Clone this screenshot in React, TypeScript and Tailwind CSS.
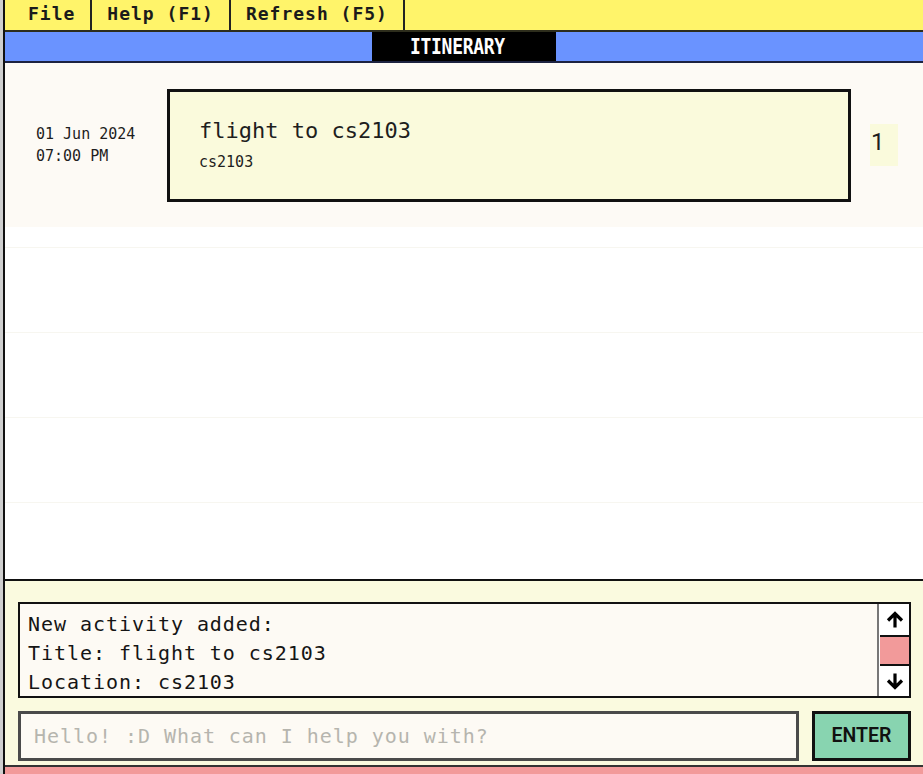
const mono = "font-['DejaVu_Sans_Mono',monospace]";

const menuItems = ["File", "Help (F1)", "Refresh (F5)"];

function MenuBar() {
  return (
    <div className={`flex h-[32px] shrink-0 border-b-2 border-[#2d2d1c] bg-[#fff46a] pl-[8px] ${mono}`}>
      {menuItems.map((item) => (
        <div
          key={item}
          className="h-[30px] border-r-2 border-[#222] px-[15px] text-[18px] font-bold leading-[28px] tracking-[1px] text-[#1b1b1b]"
        >
          {item}
        </div>
      ))}
    </div>
  );
}

function TitleBar() {
  return (
    <div className="flex h-[31px] shrink-0 justify-center border-b-2 border-[#1c2240] bg-[#6a93ff]">
      <div className="flex w-[184px] items-center bg-black pl-[38px]">
        <span
          className={`inline-block scale-y-[1.2] text-[18px] font-bold leading-none tracking-[-0.3px] text-white ${mono}`}
        >
          ITINERARY
        </span>
      </div>
    </div>
  );
}

function ActivityRow() {
  return (
    <div className="h-[185px] border-b border-[#f7f6f0]">
      <div className="flex h-[164px] items-center bg-[#fdfaf5] pl-[31px] pr-[25px]">
        <div className={`w-[131px] shrink-0 text-[15px] leading-[22px] text-[#1e1e1e] ${mono}`}>
          <div>01 Jun 2024</div>
          <div>07:00 PM</div>
        </div>
        <div className={`h-[113px] flex-1 border-[3px] border-[#111] bg-[#fafadc] pl-[29px] pt-[26px] ${mono}`}>
          <div className="text-[22px] leading-[26px] text-[#1e1e1e]">flight to cs2103</div>
          <div className="mt-[9px] text-[15px] leading-[18px] text-[#1e1e1e]">cs2103</div>
        </div>
        <div className="ml-[19px] h-[42px] w-[28px] shrink-0 bg-[#fafadc] pl-[1px] font-['Roboto',sans-serif] text-[24px] leading-[37px] text-[#1e1e1e]">
          1
        </div>
      </div>
    </div>
  );
}

function ItineraryList() {
  return (
    <div className="h-[516px] shrink-0 overflow-hidden bg-white">
      <ActivityRow />
      {[0, 1, 2, 3].map((i) => (
        <div key={i} className="h-[85px] border-b border-[#f7f6f0]" />
      ))}
    </div>
  );
}

function Arrow({ up }: { up: boolean }) {
  return (
    <svg width="20" height="18" viewBox="0 0 20 18" className={up ? "" : "rotate-180"}>
      <path d="M10 16.5V2.5M3 9.5l7-7 7 7" fill="none" stroke="#000" strokeWidth="3.2" />
    </svg>
  );
}

function CommandPanel() {
  return (
    <div className="flex h-[186px] shrink-0 flex-col border-t-2 border-[#111] bg-[#fafadf] pb-[4px] pl-[13px] pr-[12px] pt-[21px]">
      <div className="flex h-[96px] border-2 border-[#111] bg-[#fdfaf4]">
        <div className={`flex-1 overflow-hidden pl-[8px] pt-[6px] text-[20px] leading-[29px] tracking-[0.95px] text-[#151515] ${mono}`}>
          <div>New activity added:</div>
          <div>Title: flight to cs2103</div>
          <div>Location: cs2103</div>
        </div>
        <div className="flex w-[32px] flex-col border-l-2 border-[#777] bg-white pl-[1px]">
          <div className="flex h-[33px] items-center justify-center border-b-2 border-[#111] bg-white">
            <Arrow up />
          </div>
          <div className="flex-1 bg-[#f29a9a]" />
          <div className="flex h-[32px] items-center justify-center border-t-2 border-[#111] bg-white">
            <Arrow up={false} />
          </div>
        </div>
      </div>
      <div className="mt-[13px] flex h-[50px] gap-[13px]">
        <div className={`flex flex-1 items-center border-[3px] border-[#4a4a4a] bg-[#fdfaf4] pl-[13px] text-[20px] tracking-[0.95px] text-[#b6b5ae] ${mono}`}>
          Hello! :D What can I help you with?
        </div>
        <div className="flex w-[99px] items-center justify-center border-[3px] border-[#111] bg-[#88d4b0] font-['Roboto',sans-serif] text-[19.5px] font-semibold text-[#111]">
          ENTER
        </div>
      </div>
    </div>
  );
}

export default function App() {
  return (
    <div className="flex h-[774px] w-full overflow-hidden bg-white">
      <div className="w-[3px] shrink-0 bg-[#cfcfcf]" />
      <div className="flex min-w-0 flex-1 flex-col border-l-2 border-[#111]">
        <MenuBar />
        <TitleBar />
        <ItineraryList />
        <CommandPanel />
        <div className="h-[9px] shrink-0 border-t-2 border-[#333] bg-[#f29a9a]" />
      </div>
    </div>
  );
}
